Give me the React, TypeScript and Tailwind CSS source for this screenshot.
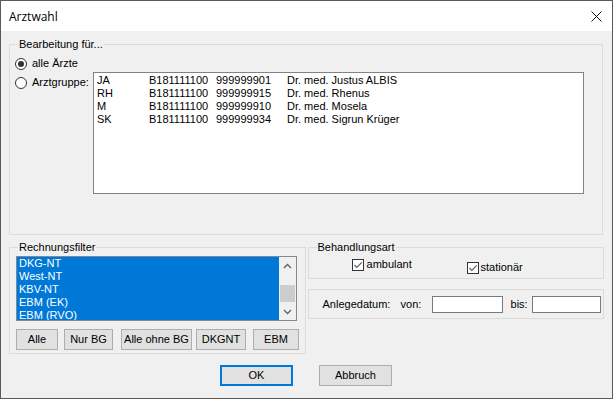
import React from 'react'

const font = "font-['Liberation_Sans',Arial,sans-serif] text-[11px] leading-[13px] text-black"

const aerzte = [
  { kuerzel: 'JA', bsnr: 'B181111100', lanr: '999999901', name: 'Dr. med. Justus ALBIS' },
  { kuerzel: 'RH', bsnr: 'B181111100', lanr: '999999915', name: 'Dr. med. Rhenus' },
  { kuerzel: 'M', bsnr: 'B181111100', lanr: '999999910', name: 'Dr. med. Mosela' },
  { kuerzel: 'SK', bsnr: 'B181111100', lanr: '999999934', name: 'Dr. med. Sigrun Krüger' },
]

const filter = ['DKG-NT', 'West-NT', 'KBV-NT', 'EBM (EK)', 'EBM (RVO)']

// Gruppenrahmen mit Beschriftung auf der Linie
const GroupBox = ({
  label,
  className,
  children,
}: {
  label: string
  className: string
  children?: React.ReactNode
}) => (
  <div className={`relative border border-[#dcdcdc] ${className}`}>
    <span className="absolute -top-[7px] left-[8px] bg-[#f0f0f0] px-[1px] leading-[13px]">
      {label}
    </span>
    {children}
  </div>
)

const Radio = ({ checked }: { checked?: boolean }) => (
  <span className="w-[12px] h-[12px] rounded-full border border-[#333333] bg-white flex items-center justify-center shrink-0">
    {checked && <span className="w-[6px] h-[6px] rounded-full bg-[#333333]" />}
  </span>
)

const Checkbox = () => (
  <span className="w-[12px] h-[12px] border border-[#333333] bg-white flex items-center justify-center shrink-0">
    <svg width="10" height="10" viewBox="0 0 10 10">
      <path d="M1.5 5 L3.8 7.3 L8.8 2.3" fill="none" stroke="#5c5c5c" strokeWidth="1.2" />
    </svg>
  </span>
)

const Btn = ({ label, className }: { label: string; className: string }) => (
  <button className={`h-[21px] bg-[#e1e1e1] border border-[#adadad] flex items-center justify-center ${className}`}>
    {label}
  </button>
)

export default function App() {
  return (
    <div className={`w-[613px] h-[399px] border border-[#5a5a5a] flex flex-col ${font}`}>
      {/* Titelleiste */}
      <div className="h-[30px] bg-white flex items-center justify-between pl-[8px] pr-[10px] shrink-0">
        <span className="font-['Open_Sans',sans-serif] text-[12px]">Arztwahl</span>
        <svg width="11" height="11" viewBox="0 0 11 11">
          <path d="M0.5 0.5 L10.5 10.5 M10.5 0.5 L0.5 10.5" stroke="#111" strokeWidth="1" />
        </svg>
      </div>

      <div className="flex-1 bg-[#f0f0f0] px-[8px] pt-[13px]">
        {/* Bearbeitung für... */}
        <GroupBox label="Bearbeitung für..." className="w-[594px] h-[191px] pl-[5px] pt-[12px]">
          <div className="flex items-center gap-[5px] h-[13px]">
            <Radio checked />
            <span>alle Ärzte</span>
          </div>
          <div className="flex mt-[2px]">
            <div className="w-[78px] pt-[4px] flex items-center gap-[5px] self-start h-[17px]">
              <Radio />
              <span>Arztgruppe:</span>
            </div>
            <div className="w-[491px] h-[122px] border border-[#828282] bg-white pl-[3px] pt-[1px]">
              {aerzte.map((a) => (
                <div key={a.kuerzel} className="flex h-[13px] whitespace-nowrap">
                  <span className="w-[52px]">{a.kuerzel}</span>
                  <span className="w-[67px]">{a.bsnr}</span>
                  <span className="w-[71px]">{a.lanr}</span>
                  <span>{a.name}</span>
                </div>
              ))}
            </div>
          </div>
        </GroupBox>

        <div className="flex mt-[12px]">
          {/* Rechnungsfilter */}
          <GroupBox label="Rechnungsfilter" className="w-[298px] h-[107px] pl-[6px] pt-[8px]">
            <div className="w-[281px] h-[65px] border border-[#828790] flex">
              <div className="flex-1 bg-[#0078d7] overflow-hidden">
                {filter.map((f) => (
                  <div key={f} className="h-[13px] leading-[13px] pl-[2px] text-white whitespace-nowrap">
                    {f}
                  </div>
                ))}
              </div>
              <div className="w-[17px] bg-[#f0f0f0] flex flex-col items-center">
                <div className="h-[17px] flex items-center justify-center">
                  <svg width="9" height="6" viewBox="0 0 9 6">
                    <path d="M1 5 L4.5 1.5 L8 5" fill="none" stroke="#606060" strokeWidth="1.3" />
                  </svg>
                </div>
                <div className="w-[15px] h-[17px] bg-[#cdcdcd] mt-[11px]" />
                <div className="h-[17px] mt-auto flex items-center justify-center">
                  <svg width="9" height="6" viewBox="0 0 9 6">
                    <path d="M1 1 L4.5 4.5 L8 1" fill="none" stroke="#606060" strokeWidth="1.3" />
                  </svg>
                </div>
              </div>
            </div>
            <div className="flex mt-[8px]">
              <Btn label="Alle" className="w-[42px]" />
              <Btn label="Nur BG" className="w-[49px] ml-[6px]" />
              <Btn label="Alle ohne BG" className="w-[71px] ml-[8px]" />
              <Btn label="DKGNT" className="w-[50px] ml-[4px]" />
              <Btn label="EBM" className="w-[46px] ml-[7px]" />
            </div>
          </GroupBox>

          <div className="w-[298px] ml-[2px] flex flex-col">
            {/* Behandlungsart */}
            <GroupBox label="Behandlungsart" className="h-[32px] flex items-start pl-[43px]">
              <div className="w-[115px] flex items-center gap-[3px] mt-[10px]">
                <Checkbox />
                <span>ambulant</span>
              </div>
              <div className="flex items-center gap-[2px] mt-[13px]">
                <Checkbox />
                <span>stationär</span>
              </div>
            </GroupBox>

            {/* Anlegedatum */}
            <div className="h-[30px] mt-[10px] border border-[#dcdcdc] flex items-center pl-[14px]">
              <span className="w-[78px]">Anlegedatum:</span>
              <span className="w-[31px]">von:</span>
              <span className="w-[71px] h-[17px] bg-white border border-[#7a7a7a]" />
              <span className="w-[21px] ml-[8px]">bis:</span>
              <span className="w-[69px] h-[17px] bg-white border border-[#7a7a7a]" />
            </div>
          </div>
        </div>

        {/* OK / Abbruch */}
        <div className="flex mt-[11px]">
          <button className="w-[73px] h-[21px] ml-[211px] bg-[#e1e1e1] border-2 border-[#0078d7] flex items-center justify-center">
            OK
          </button>
          <Btn label="Abbruch" className="w-[73px] ml-[26px]" />
        </div>
      </div>
    </div>
  )
}
